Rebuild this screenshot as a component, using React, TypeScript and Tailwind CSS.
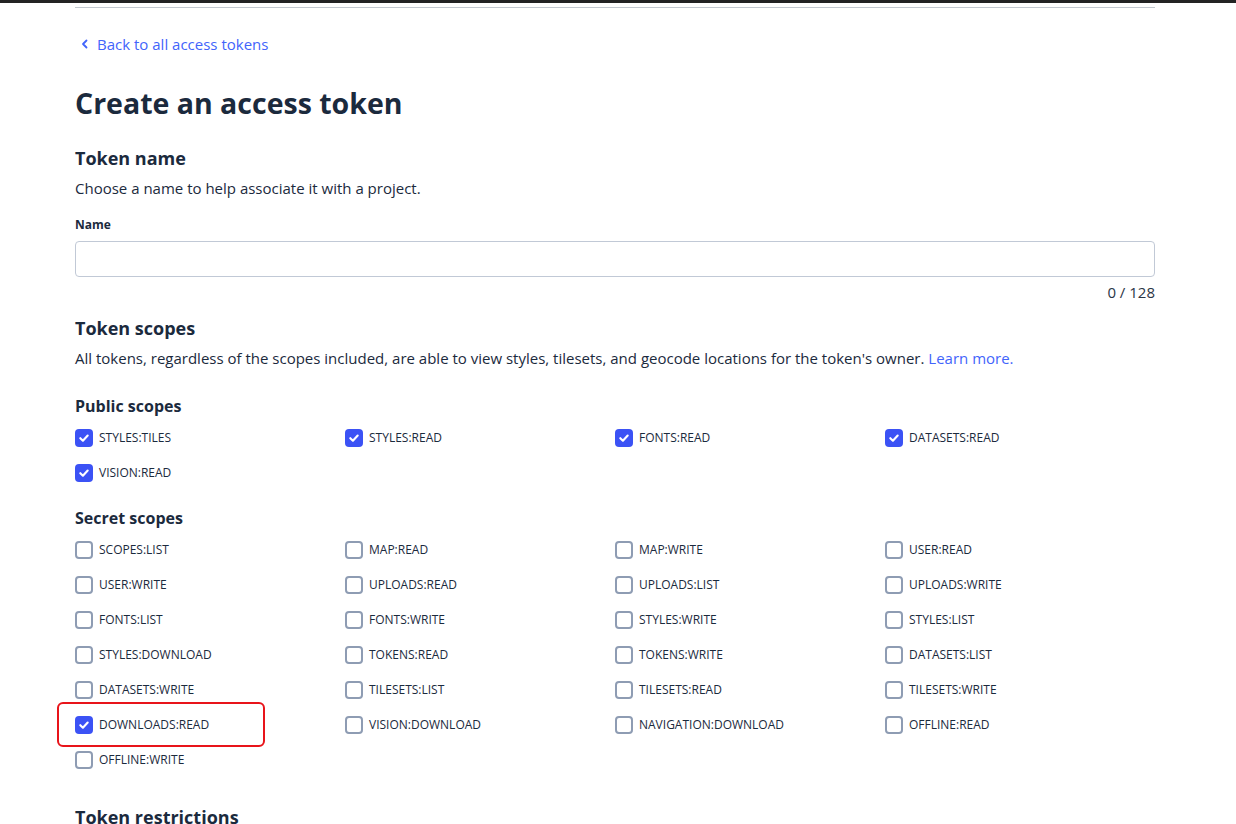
import React from "react";

const font = { fontFamily: '"Open Sans", "Liberation Sans", sans-serif' };

type Scope = { name: string; checked?: boolean; highlight?: boolean };

const publicScopes: Scope[] = [
  { name: "STYLES:TILES", checked: true },
  { name: "STYLES:READ", checked: true },
  { name: "FONTS:READ", checked: true },
  { name: "DATASETS:READ", checked: true },
  { name: "VISION:READ", checked: true },
];

const secretScopes: Scope[] = [
  { name: "SCOPES:LIST" },
  { name: "MAP:READ" },
  { name: "MAP:WRITE" },
  { name: "USER:READ" },
  { name: "USER:WRITE" },
  { name: "UPLOADS:READ" },
  { name: "UPLOADS:LIST" },
  { name: "UPLOADS:WRITE" },
  { name: "FONTS:LIST" },
  { name: "FONTS:WRITE" },
  { name: "STYLES:WRITE" },
  { name: "STYLES:LIST" },
  { name: "STYLES:DOWNLOAD" },
  { name: "TOKENS:READ" },
  { name: "TOKENS:WRITE" },
  { name: "DATASETS:LIST" },
  { name: "DATASETS:WRITE" },
  { name: "TILESETS:LIST" },
  { name: "TILESETS:READ" },
  { name: "TILESETS:WRITE" },
  { name: "DOWNLOADS:READ", checked: true, highlight: true },
  { name: "VISION:DOWNLOAD" },
  { name: "NAVIGATION:DOWNLOAD" },
  { name: "OFFLINE:READ" },
  { name: "OFFLINE:WRITE" },
];

function Checkbox({ checked }: { checked?: boolean }) {
  if (checked) {
    return (
      <span className="flex h-[18px] w-[18px] shrink-0 items-center justify-center rounded-[4px] bg-[#3b52f5]">
        <svg width="12" height="12" viewBox="0 0 12 12" fill="none">
          <path d="M2.3 6.2 L4.9 8.7 L9.7 3.5" stroke="white" strokeWidth="2.1" strokeLinecap="round" strokeLinejoin="round" />
        </svg>
      </span>
    );
  }
  return <span className="h-[18px] w-[18px] shrink-0 rounded-[4px] border-2 border-[#8e9cb3] bg-white" />;
}

function ScopeItem({ scope }: { scope: Scope }) {
  return (
    <div className="relative flex h-[35px] items-center gap-[6px]">
      {scope.highlight && (
        <div className="pointer-events-none absolute left-[-18px] top-[-5px] h-[45px] w-[208px] rounded-[6px] border-2 border-[#e8141a]" />
      )}
      <Checkbox checked={scope.checked} />
      <span className="text-[12px] leading-[16px] text-[#1b2a3d]">{scope.name}</span>
    </div>
  );
}

export default function App() {
  return (
    <div className="min-h-[824px] w-full overflow-hidden bg-white text-[#1b2a3d]" style={font}>
      <div className="h-[3px] w-full bg-[#232323]" />
      <div className="ml-[75px] w-[1080px]">
        <div className="mt-[4px] h-px bg-[#c2c8cf]" />
        <a className="mt-[26px] flex h-[20px] items-center gap-[8px] pl-[6px] text-[15px] leading-[20px] text-[#4264fb]">
          <svg width="8" height="10" viewBox="0 0 8 10" fill="none">
            <path d="M5.5 1.5 L2 5 L5.5 8.5" stroke="#4264fb" strokeWidth="1.8" strokeLinecap="round" strokeLinejoin="round" />
          </svg>
          Back to all access tokens
        </a>
        <h1 className="mt-[31px] text-[28.5px] font-bold leading-[36px] text-[#1b2a3d]">Create an access token</h1>

        <h2 className="mt-[25px] text-[18px] font-bold leading-[24px]">Token name</h2>
        <p className="mt-[8px] text-[15px] leading-[20px]">Choose a name to help associate it with a project.</p>
        <div className="mt-[19px] text-[12px] font-bold leading-[16px]">Name</div>
        <input className="mt-[8px] block h-[36px] w-full rounded-[4px] border border-[#c1c9d6] px-3 text-[14px] outline-none" />
        <div className="mt-[5px] text-right text-[15px] leading-[20px] text-[#2a3545]">0 / 128</div>

        <h2 className="mt-[14px] text-[18px] font-bold leading-[24px]">Token scopes</h2>
        <p className="mt-[8px] text-[15px] leading-[20px]">
          All tokens, regardless of the scopes included, are able to view styles, tilesets, and geocode locations for the token's owner.{" "}
          <a className="text-[#4264fb]">Learn more.</a>
        </p>

        <h3 className="mt-[27px] text-[16px] font-bold leading-[22px]">Public scopes</h3>
        <div className="mt-[3px] grid grid-cols-4">
          {publicScopes.map((s) => (
            <ScopeItem key={s.name} scope={s} />
          ))}
        </div>

        <h3 className="mt-[17px] text-[16px] font-bold leading-[22px]">Secret scopes</h3>
        <div className="mt-[3px] grid grid-cols-4">
          {secretScopes.map((s) => (
            <ScopeItem key={s.name} scope={s} />
          ))}
        </div>

        <h2 className="mt-[28px] text-[18px] font-bold leading-[24px]">Token restrictions</h2>
      </div>
    </div>
  );
}
